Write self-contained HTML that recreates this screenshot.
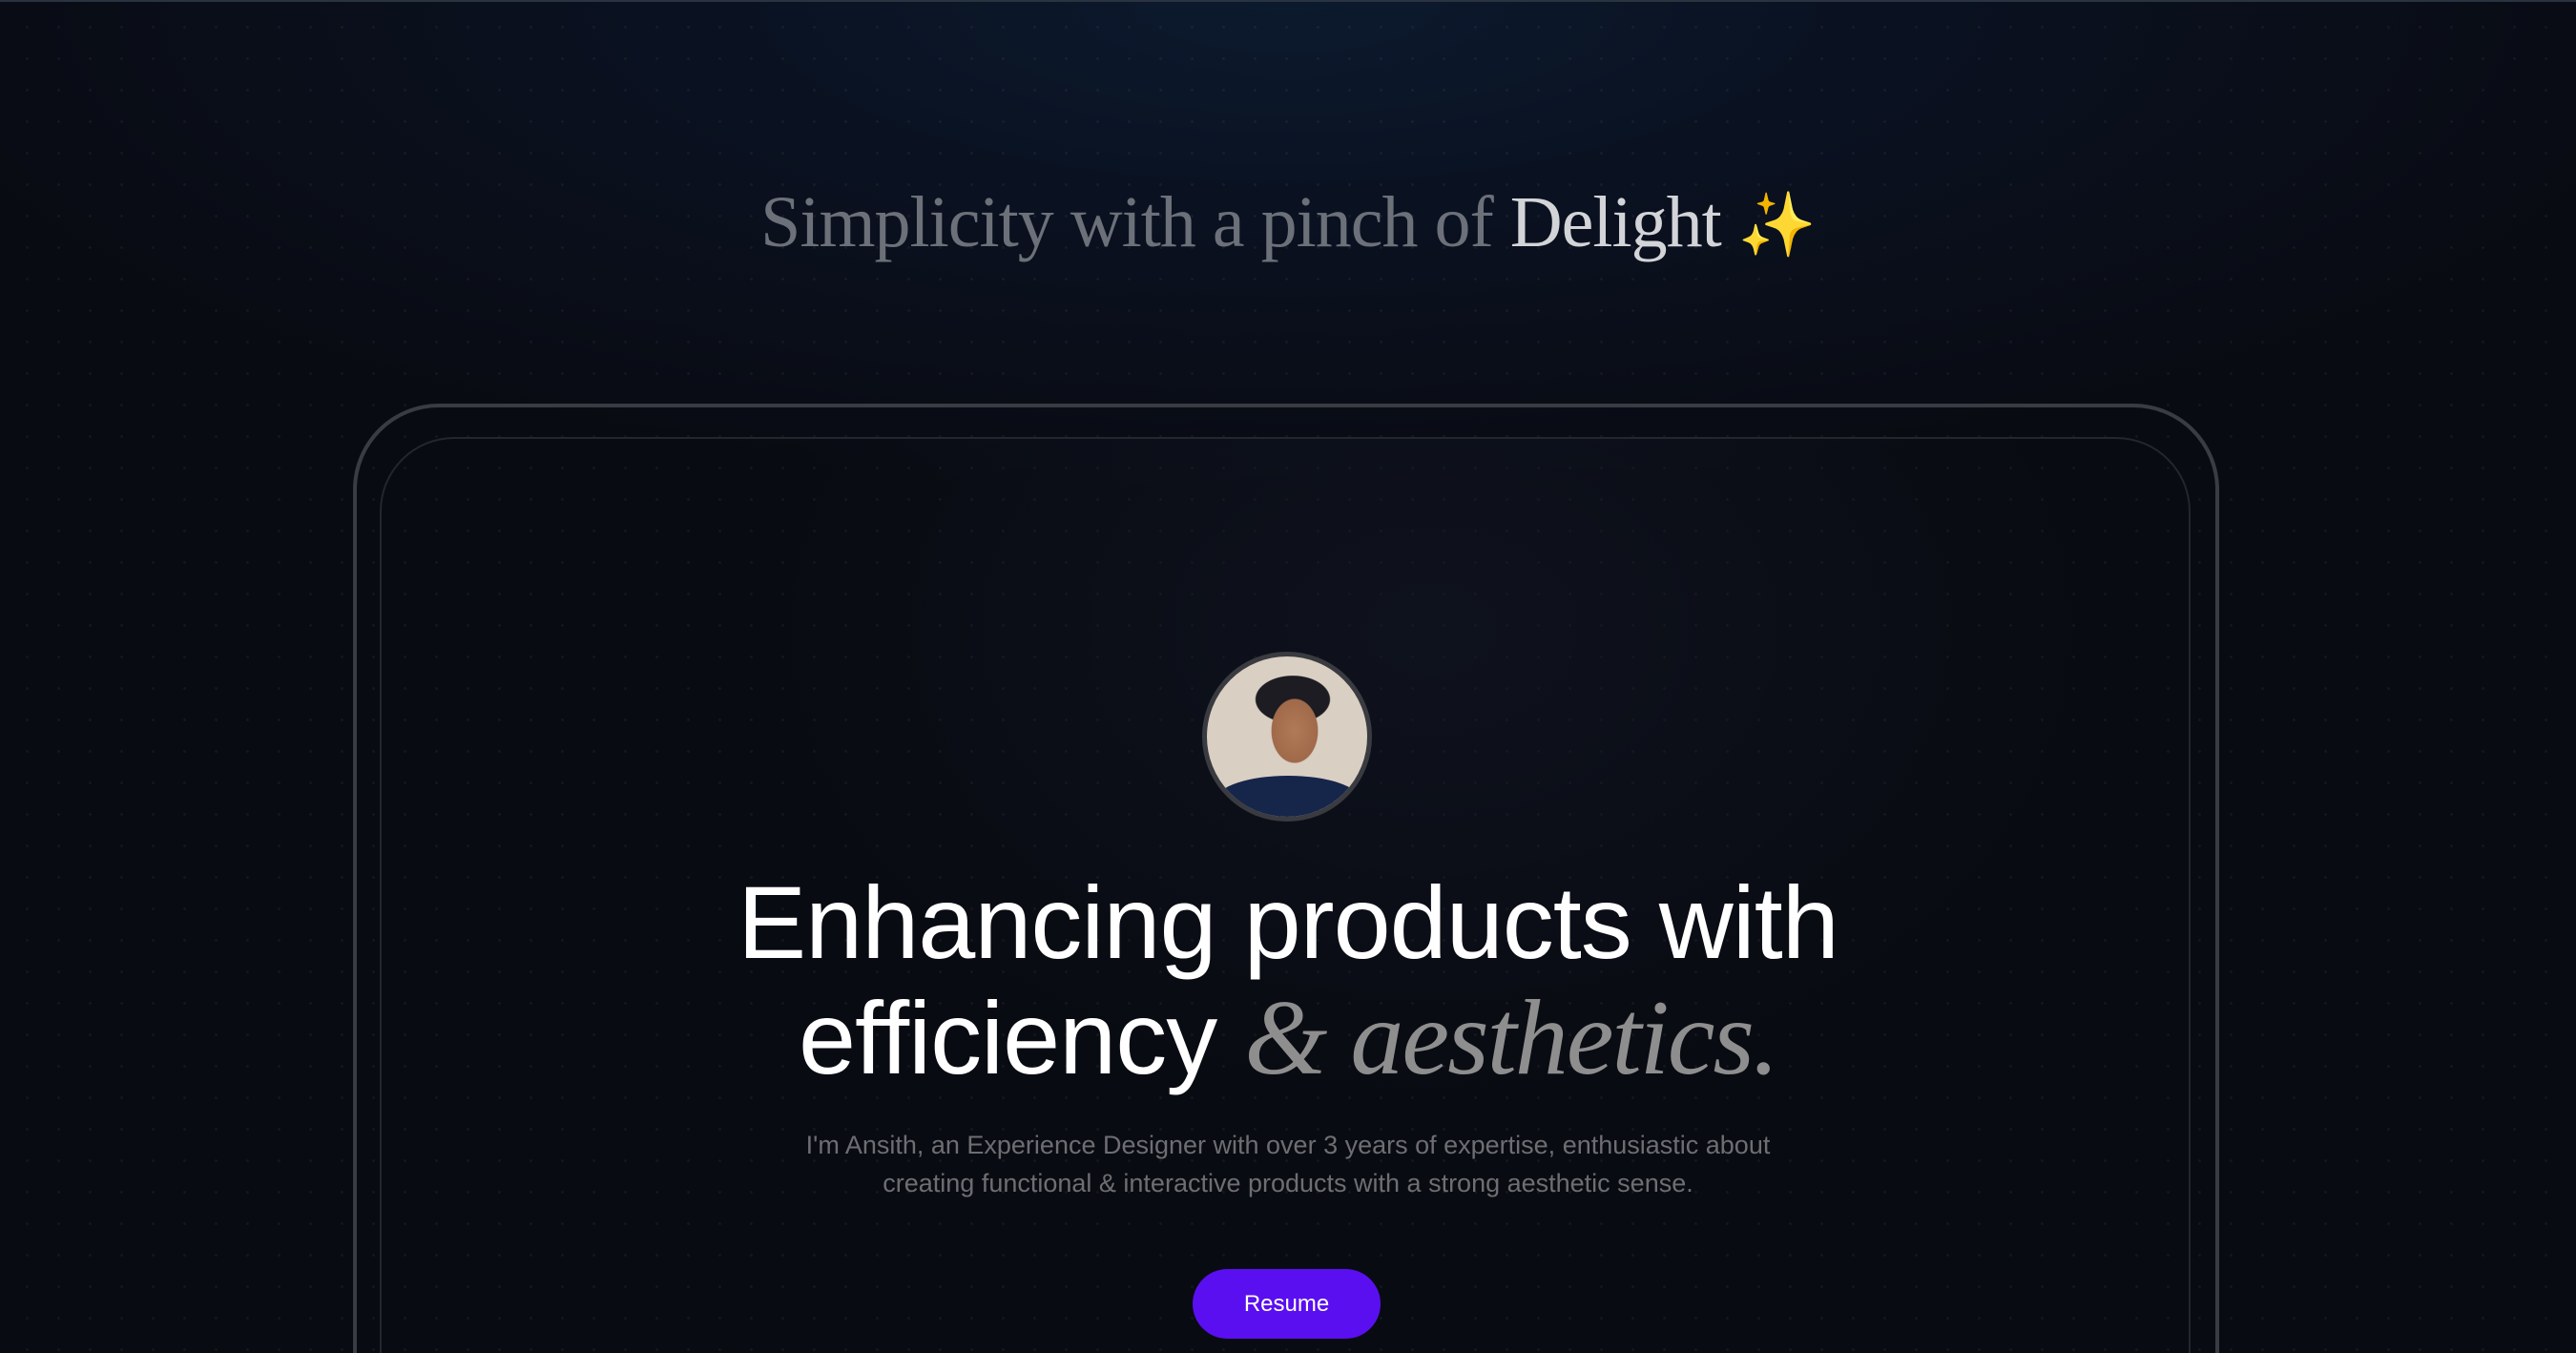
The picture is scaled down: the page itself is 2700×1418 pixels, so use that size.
<!DOCTYPE html>
<html><head><meta charset="utf-8"><style>
html,body{margin:0;padding:0;width:2700px;height:1418px;overflow:hidden}
body{font-family:"Liberation Sans",sans-serif;background:#090b12}
.wrap{position:relative;width:2700px;height:1418px;overflow:hidden;
background:radial-gradient(ellipse 1500px 520px at 1350px 0px,#0c1a2e 0%,#0a1120 45%,#090b12 100%),#090b12;}
.dots{position:absolute;left:0;top:0;width:2700px;height:1418px;background-image:radial-gradient(circle,rgba(255,255,255,0.05) 1.2px,transparent 1.6px);background-size:33px 33px;background-position:12px 12px}
.topline{position:absolute;left:0;top:0;width:2700px;height:2px;background:#2a3340}
.tag{position:absolute;left:0;width:2700px;top:190px;text-align:center;font-family:"Liberation Serif",serif;font-size:76px;color:#6c7079;letter-spacing:-1px}
.tag b{font-weight:normal;color:#d2d4d8}
.tag .sp{color:#f5c542;font-size:66px}
.outer{position:absolute;left:370px;top:423px;width:1956px;height:995px;border:4px solid #3a3c44;border-bottom:none;border-radius:90px 90px 0 0;box-sizing:border-box}
.inner{position:absolute;left:398px;top:458px;width:1898px;height:960px;border:2px solid #24262d;border-bottom:none;border-radius:78px 78px 0 0;box-sizing:border-box;
background:radial-gradient(ellipse 700px 500px at 1100px 200px,rgba(20,25,40,0.5),transparent)}
.av{position:absolute;left:1260px;top:683px;width:178px;height:178px;border-radius:50%;border:5px solid #3a3b40;box-sizing:border-box;overflow:hidden;
background:radial-gradient(ellipse 40px 55px at 92px 78px,#b07a58 0%,#a06a4a 60%,transparent 62%),radial-gradient(ellipse 55px 35px at 90px 45px,#1c1c22 0%,#1c1c22 70%,transparent 72%),#d9cfc3}
.av .body{position:absolute;left:10px;top:125px;width:150px;height:50px;background:#16254a;border-radius:50% 50% 0 0}
h1{position:absolute;left:0;width:2700px;top:906px;margin:0;text-align:center;color:#fff;font-weight:normal;font-size:108px;line-height:121px;letter-spacing:-1px}
h1 i{font-family:"Liberation Serif",serif;color:#8e8e8e;font-size:112px;letter-spacing:-2px}
p{position:absolute;left:0;width:2700px;top:1180px;margin:0;text-align:center;color:#6e6e72;font-size:27px;line-height:40px}
.btn{position:absolute;left:1250px;top:1330px;width:197px;height:73px;border-radius:37px;background:#5a0ff0;color:#fff;font-size:24px;text-align:center;line-height:73px}
</style></head><body><div class="wrap">
<div class="dots"></div>
<div class="topline"></div>
<div class="tag">Simplicity with a pinch of <b>Delight</b> <span class="sp">✨</span></div>
<div class="outer"></div>
<div class="inner"></div>
<div class="av"><div class="body"></div></div>
<h1>Enhancing products with<br>efficiency <i>&amp; aesthetics.</i></h1>
<p>I'm Ansith, an Experience Designer with over 3 years of expertise, enthusiastic about<br>creating functional &amp; interactive products with a strong aesthetic sense.</p>
<div class="btn">Resume</div>
</div></body></html>
